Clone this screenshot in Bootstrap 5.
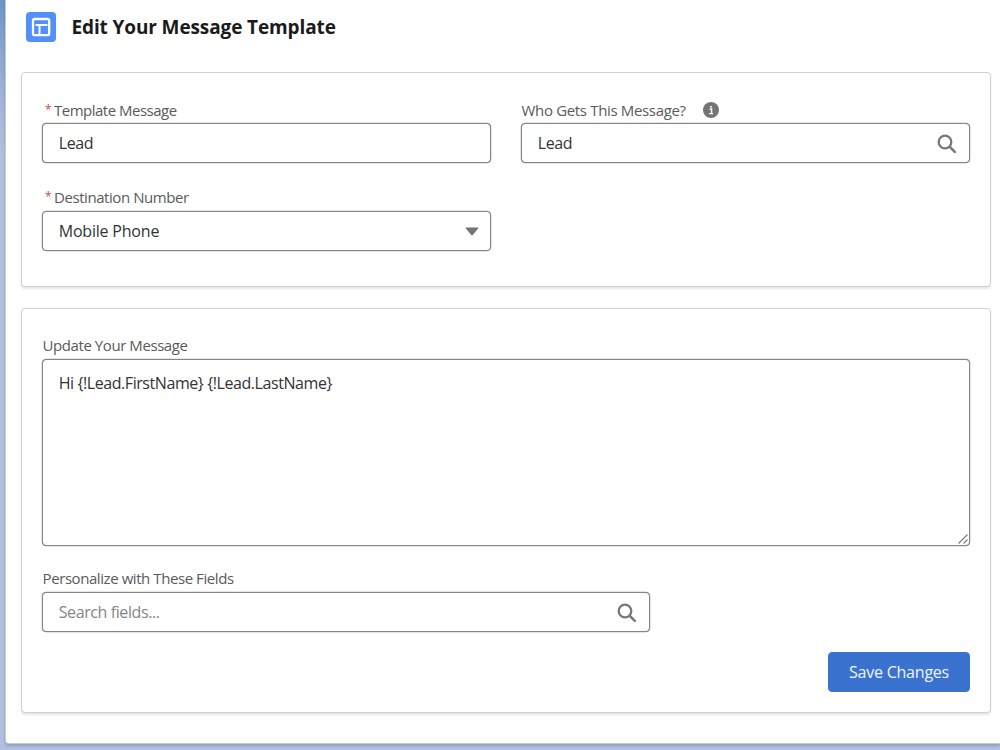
<!DOCTYPE html>
<html lang="en">
<head>
<meta charset="utf-8">
<meta name="viewport" content="width=device-width, initial-scale=1">
<title>Edit Your Message Template</title>
<link href="https://cdn.jsdelivr.net/npm/bootstrap@5.3.0/dist/css/bootstrap.min.css" rel="stylesheet">
<style>
body { font-family: "Open Sans", "Noto Sans", sans-serif; height: 750px; overflow: hidden; color: #2e2e2e;
  background: linear-gradient(#6e93c9 0, #8fa9d4 60px, #a5b7d9 110px, #b0c0de 150px, #b0c0de 100%) no-repeat #b0c0de; }
.panel { margin-left: 5px; height: 744px; background: #fff; border: 1px solid #c4c9d2; border-width: 0 0 1px 1px; border-bottom-left-radius: 4px; box-shadow: 0 2px 3px rgba(0,0,0,.18); padding: 0 9px 0 15px; }
.panel-head { height: 71.5px; padding: 11px 0 0 5px; gap: 15.5px; }
.page-title { font-size: 19px; font-weight: 700; color: #1b1b1b; line-height: 32px; letter-spacing: -.12px; }
.card.section { border: 1px solid #d0d0d0; border-radius: 4px; box-shadow: 0 2px 2px rgba(0,0,0,.1); padding: 0 20px; }
.section-a { height: 215px; padding-top: 27px !important; }
.section-b { height: 405px; margin-top: 21px; padding-top: 26px !important; }
.fields { --bs-gutter-x: 30px; row-gap: 24px; }
.form-label { display: flex; align-items: center; height: 20px; font-size: 15px; line-height: 20px; color: #5a5a5a; margin-bottom: 3px; white-space: nowrap; letter-spacing: -.43px; padding-left: .6px; }
.label-raised { margin-bottom: 4px; }
.req { color: #d0453f; width: 9px; margin-left: 2.4px; font-size: 12px; flex: none; }
.form-control, .form-select { height: 40px; border: 1px solid #858585; border-radius: 4px; font-size: 16px; line-height: 24px; padding: 7px 15.7px; color: #333; box-shadow: 0 0 0 .25px #999; letter-spacing: -.2px; }
.form-control { letter-spacing: -.4px; }
.form-select { background-image: none; }
.form-control::placeholder { color: #858585; opacity: 1; }
textarea.form-control { height: 187px; padding-top: 11px; resize: none; letter-spacing: -.43px; }
.over { position: absolute; pointer-events: none; }
.search-field { width: 608px; }
.btn-save { --bs-btn-bg: #3a72d0; --bs-btn-border-color: #3a72d0; --bs-btn-color: #f2f6fd; width: 142px; height: 40px; font-size: 16px; line-height: 24px; padding: 0; border-radius: 4px; white-space: nowrap; letter-spacing: -.22px; }
</style>
</head>
<body>
<main class="panel">
  <header class="panel-head d-flex align-items-start">
    <svg class="flex-shrink-0" width="30" height="30" viewBox="0 0 30 30" style="margin-top:.5px"><rect width="30" height="30" rx="4" fill="#5090f8"/><rect x="7" y="7" width="16.2" height="16.2" rx="1.8" fill="none" stroke="#fff" stroke-width="2.3"/><path d="M9.5 12.9h12M13.5 13v9" stroke="#fff" stroke-width="2" fill="none"/></svg>
    <h1 class="page-title mb-0">Edit Your Message Template</h1>
  </header>

  <section class="card section section-a">
    <div class="row fields">
      <div class="col-6">
        <label class="form-label" for="tpl"><span class="req">*</span><span style="letter-spacing:-.5px">Template Message</span></label>
        <input id="tpl" class="form-control" value="Lead">
      </div>
      <div class="col-6">
        <label class="form-label" for="who"><span style="letter-spacing:-.34px">Who Gets This Message?</span>
          <svg style="margin-left:17.5px" width="16" height="16" viewBox="0 0 16 16"><circle cx="8" cy="8" r="8" fill="#747474"/><path d="M6.6 7h2v4.2M6.2 11.6h3.8M7 4.7h1.8" stroke="#fff" stroke-width="1.4" fill="none"/></svg></label>
        <div class="position-relative">
          <input id="who" class="form-control" value="Lead">
          <svg class="over" style="right:13px;top:11px" width="20" height="20" viewBox="0 0 20 20" fill="none" stroke="#777"><circle cx="8" cy="8" r="6.3" stroke-width="2.3"/><path d="M12.8 12.8l5 5" stroke-width="2.6" stroke-linecap="round"/></svg>
        </div>
      </div>
      <div class="col-6">
        <label class="form-label label-raised" for="dest"><span class="req">*</span><span>Destination Number</span></label>
        <div class="position-relative">
          <select id="dest" class="form-select"><option>Mobile Phone</option></select>
          <svg class="over" style="right:12px;top:16px" width="14" height="9" viewBox="0 0 14 9"><path d="M1.2.5h11.6q.9.2.4.9L7.7 8q-.7.6-1.4 0L.8 1.4Q.4.6 1.2.5z" fill="#747474"/></svg>
        </div>
      </div>
    </div>
  </section>

  <section class="card section section-b">
    <label class="form-label label-raised" for="msg">Update Your Message</label>
    <div class="position-relative">
      <textarea id="msg" class="form-control">Hi {!Lead.FirstName} {!Lead.LastName}</textarea>
      <svg class="over" style="right:2px;bottom:2px" width="10" height="10" viewBox="0 0 10 10"><path d="M.5 9.5l9-9M5.5 9.5l4-4" stroke="#777" stroke-width="1.1"/></svg>
    </div>
    <div class="search-field" style="margin-top:22px">
      <label class="form-label label-raised" for="find">Personalize with These Fields</label>
      <div class="position-relative">
        <input id="find" class="form-control" placeholder="Search fields...">
        <svg class="over" style="right:13px;top:11px" width="20" height="20" viewBox="0 0 20 20" fill="none" stroke="#777"><circle cx="8" cy="8" r="6.3" stroke-width="2.3"/><path d="M12.8 12.8l5 5" stroke-width="2.6" stroke-linecap="round"/></svg>
      </div>
    </div>
    <div class="d-flex justify-content-end" style="margin-top:20px"><button type="button" class="btn btn-primary btn-save">Save Changes</button></div>
  </section>
</main>
<script src="https://cdn.jsdelivr.net/npm/bootstrap@5.3.0/dist/js/bootstrap.bundle.min.js"></script>
</body>
</html>
